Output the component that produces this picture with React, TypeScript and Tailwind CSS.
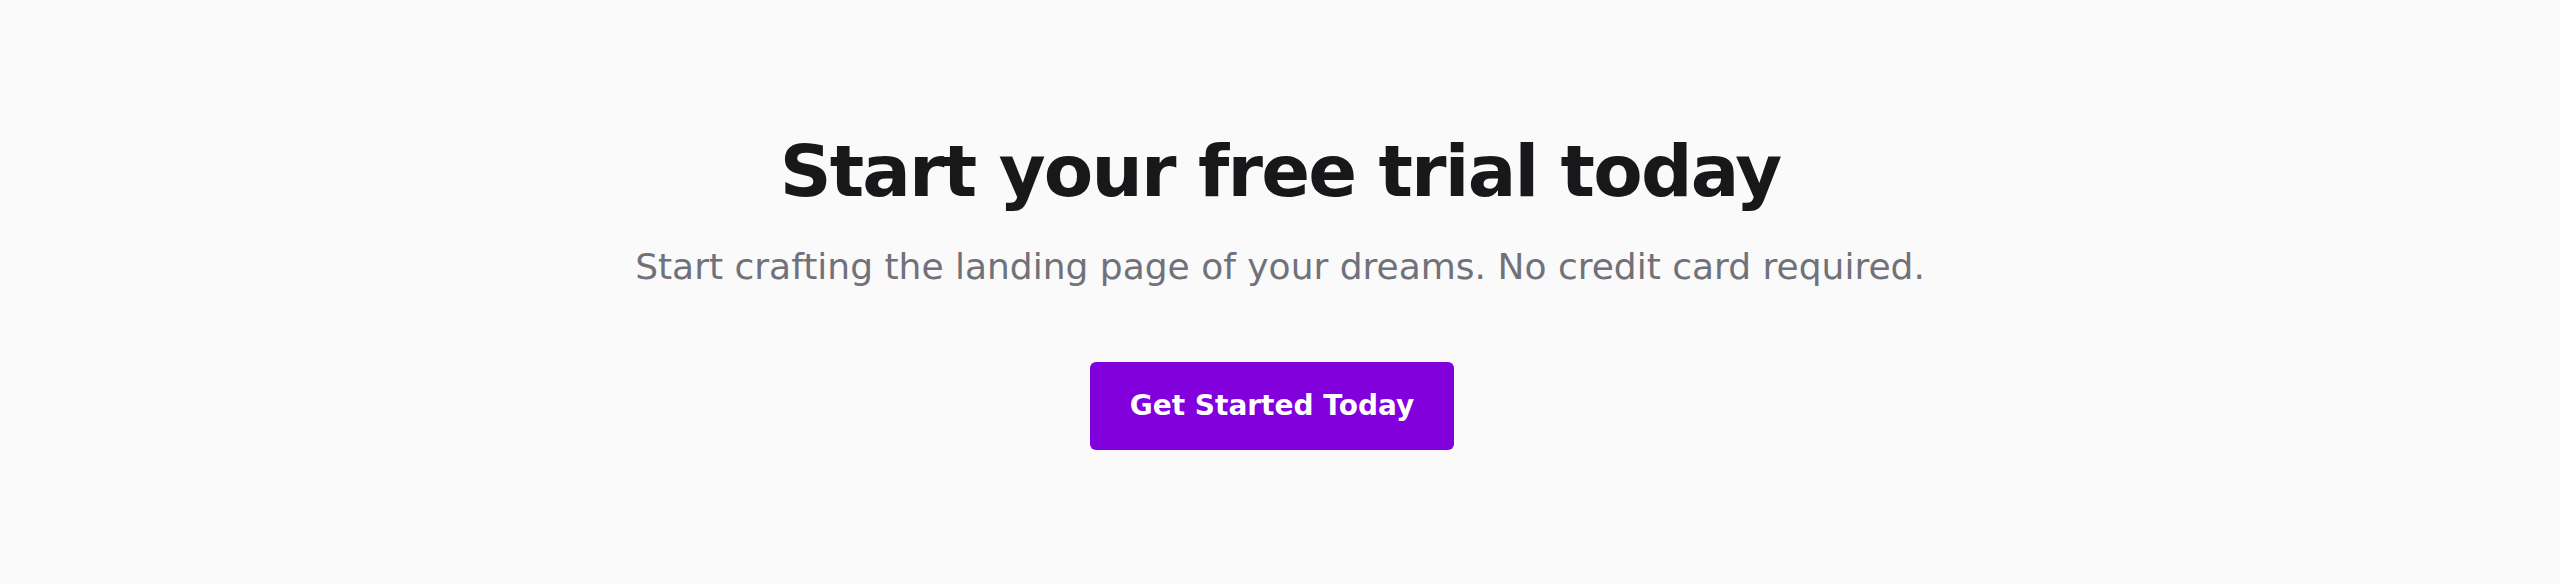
import React from 'react';

export default function App() {
  return (
    <section
      className="min-h-[584px] w-full bg-[#fafafa] flex items-center justify-center"
      style={{ fontFamily: '"DejaVu Sans", sans-serif' }}
    >
      <div className="flex flex-col items-center text-center">
        {/* Headline */}
        <h1 className="text-7xl leading-none font-bold tracking-tight text-[#18181b]">
          Start your free trial today
        </h1>

        {/* Subheading */}
        <p className="mt-10 text-4xl text-[#71717a]">
          Start crafting the landing page of your dreams. No credit card required.
        </p>

        {/* CTA */}
        <div className="mt-[75px] flex justify-center pr-4">
          <a
            href="#"
            className="inline-flex items-center justify-center rounded-md bg-[#8200db] px-10 py-6 text-[28px] leading-10 font-bold text-white"
          >
            Get Started Today
          </a>
        </div>
      </div>
    </section>
  );
}
